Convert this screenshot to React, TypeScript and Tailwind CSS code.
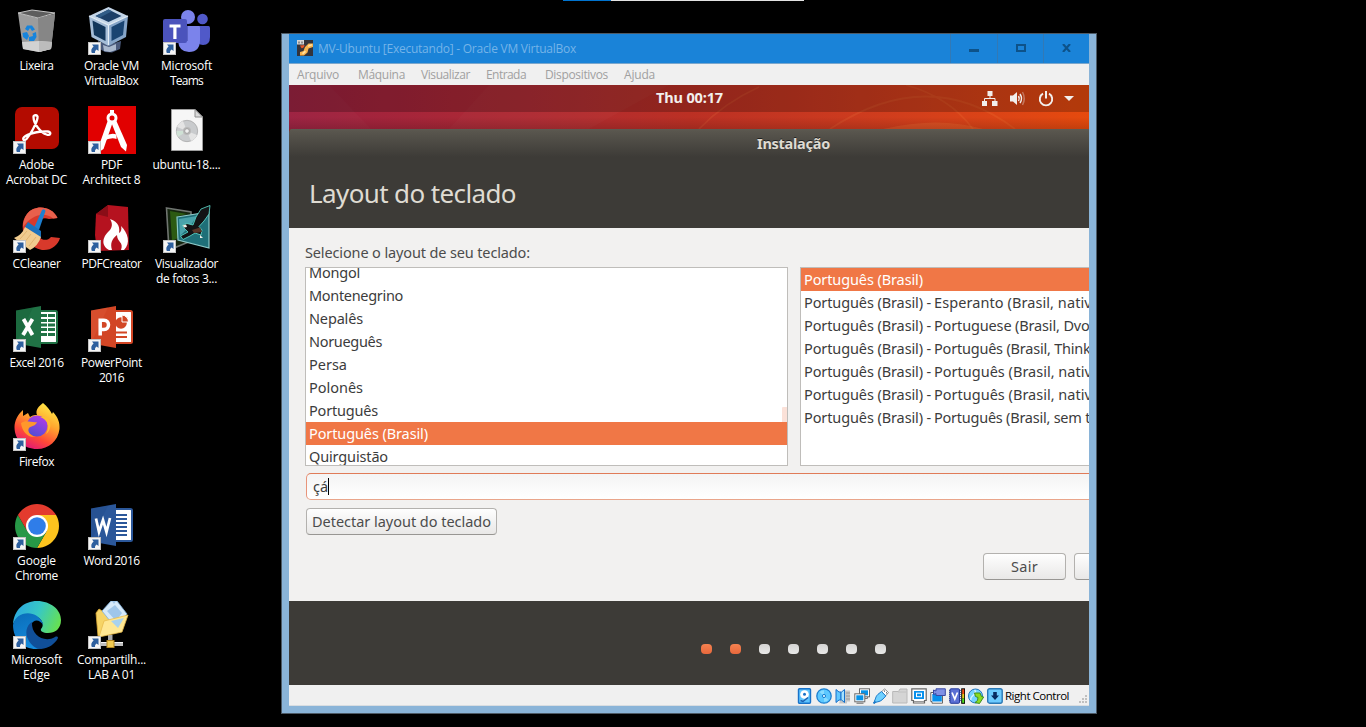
import React, { useLayoutEffect, useRef, type ReactNode } from "react";

/* Text whose tracking is adjusted so that it spans a given width. */
function Fit({ w, children, className = "" }: { w: number; children: string; className?: string }) {
  const ref = useRef<HTMLSpanElement>(null);
  useLayoutEffect(() => {
    const el = ref.current;
    if (!el) return;
    el.style.letterSpacing = "0px";
    const natural = el.getBoundingClientRect().width;
    el.style.letterSpacing = `${(w - natural) / children.length}px`;
  }, [w, children]);
  return (
    <span ref={ref} className={`inline-block whitespace-pre ${className}`}>
      {children}
    </span>
  );
}

function Icon48({ children }: { children: ReactNode }) {
  return (
    <svg viewBox="0 0 48 48" className="block size-12">
      {children}
    </svg>
  );
}

const BinIcon = () => (
  <Icon48>
    <path d="M5 6 L24 11 L42 7 L38 42 L26 45 L10 42Z" fill="#9c9c9c" />
    <path d="M5 6 L19 3 L42 6 L25 11Z" fill="#5d5d5d" stroke="#c4c4c4" strokeWidth="1" />
    <path d="M25 11 L42 7 L38 42 L26 45Z" fill="#868686" />
    <path d="M9 35 L26 34 L39 35 L38 42 L26 45 L10 42Z" fill="#d2d2d2" />
    <path d="M26 34 L39 35 L38 42 L26 45Z" fill="#bcbcbc" />
    <path d="M12 22 L14 18.500 L19 18.500 L22 22.500 L19 24 L17 21 L15 24Z" fill="#1684dc" />
    <path d="M9.500 26 L14 25 L16 29 L14 33 L10 30Z" fill="#1684dc" />
    <path d="M16 30 L20 29 L19.500 26.500 L23 25 L23.500 30 L21 34 L16 34Z" fill="#1684dc" />
  </Icon48>
);

const VBoxIcon = () => (
  <Icon48>
    <path d="M10 34 L20 38 L33 34 L32 42 L24 45.500 L17 45 L10 41Z" fill="#4a5a7c" />
    <path d="M15 38 L21 40 L28 37 V43 L22 45 L16 44Z" fill="#aab9ce" />
    <path d="M1 9 L20.500 18 V39 L3.500 30Z" fill="#a4bdd8" />
    <path d="M20.500 18 L40 9 L38 30 L20.500 39Z" fill="#86a5c9" />
    <path d="M1 9 L20.500 0 L40 9 L20.500 18Z" fill="#c3d5e8" />
    <path d="M7.500 9 L20.500 2.500 L33.500 9 L20.500 15Z" fill="#1c3f68" />
    <path d="M4.500 13.500 L17.500 20 V34 L6 28Z" fill="#12375c" />
    <path d="M23.500 20 L36.500 13.500 L35 28 L23.500 34Z" fill="#1a4472" />
    <path d="M7.500 9 L20.500 2.500 L24 4.300 L11.500 10.800Z" fill="#315c87" />
    <path d="M1 9 L20.500 18 L40 9 M20.500 18 V38" fill="none" stroke="#e3edf6" strokeWidth="1.200" />
  </Icon48>
);

const TeamsIcon = () => (
  <Icon48>
    <circle cx="39.500" cy="12" r="5.300" fill="#5059c9" />
    <path d="M35 19 H45.500 Q47 19 47 21 V30 Q47 38 40 38 Q37 38 35 36Z" fill="#5059c9" />
    <circle cx="25" cy="10" r="7" fill="#7b83eb" />
    <path d="M15 19 H36 Q37 19 37 21 V33 Q37 45 26 45 Q16 45 15 34Z" fill="#7b83eb" />
    <path d="M15 19 H25 V34 H15Z" fill="#5a62c3" />
    <rect x="0" y="12" width="24" height="24" rx="2" fill="#4b53bc" />
    <path d="M6.500 17.500 h11 v3 h-4 v11.500 h-3.200 v-11.500 h-3.800Z" fill="#fff" />
  </Icon48>
);

const AcrobatIcon = () => (
  <Icon48>
    <rect x="2" y="1" width="44" height="42" rx="7" fill="#b30b00" />
    <path
      d="M20.500 11 C20 8.500 25.500 8.500 24.500 12 C23.500 18 17 29 13.500 33 C10.500 36 8.500 32.500 12.500 30 C18 26.500 29 25 35 25.500 C39 26 37.500 30 33.500 28.500 C28 27 20.500 18 20.500 11Z"
      fill="none"
      stroke="#fff"
      strokeWidth="2.300"
    />
  </Icon48>
);

const ArchitectIcon = () => (
  <Icon48>
    <rect width="48" height="48" fill="#e10000" />
    <path d="M22 4 h4 v5 h-4Z" fill="#fff" />
    <circle cx="24" cy="12" r="4" fill="none" stroke="#fff" strokeWidth="3" />
    <path d="M20 14 L24.500 17 L15.500 43 L11 46 L10.500 41Z" fill="#fff" />
    <path d="M28 14 L23.500 17 L33 41 L38 45.500 L39 39Z" fill="#fff" />
    <path d="M16.500 30.500 Q23 26.500 28.500 28.500 L28.500 33 Q23 31 15 35Z" fill="#fff" />
  </Icon48>
);

const IsoIcon = () => (
  <Icon48>
    <path d="M8.500 3.500 H32 L39.500 11 V44.500 H8.500Z" fill="#f6f6f6" stroke="#9d9d9d" />
    <path d="M32 3.500 V11 H39.500Z" fill="#d9d9d9" stroke="#8e8e8e" />
    <circle cx="24" cy="25" r="10.700" fill="#c9cbcd" stroke="#a2a2a2" strokeWidth=".7" />
    <path d="M24 25 L14 21 A10.700 10.700 0 0 1 20 15Z M24 25 L34 29 A10.700 10.700 0 0 1 28 35Z" fill="#e4e4e4" />
    <path d="M24 25 L15 31 A10.700 10.700 0 0 1 13.500 25Z" fill="#cfe1d5" />
    <circle cx="24" cy="25" r="4" fill="#b9b9b9" />
    <circle cx="24" cy="25" r="2.300" fill="#f1f1f1" stroke="#888" strokeWidth=".6" />
  </Icon48>
);

const CCleanerIcon = () => (
  <Icon48>
    <path
      d="M44.500 13 C39 1 22 -1 14 9 C4 21 12 42 29 45 C38 46 45 40 47 33 L38 32 C33 38 24 34 23 25 C22 16 29 11 36 14Z"
      fill="#d8392b"
    />
    <path d="M44.500 13 C39 1 22 -1 14 9 C11 13 10 18 10 22 C18 10 32 6 40 13.500Z" fill="#e8604c" />
    <path d="M29 5 Q31.500 3 32.500 6 L26 25 L21 23Z" fill="#1d7fd0" />
    <path d="M15 17 L28 26 L28 33 L12 22Z" fill="#1b72bd" />
    <path d="M12 22 L28 32 Q25 41 17 45 L1 33 Q9 30 12 22Z" fill="#f0cc8f" />
    <path d="M14 26 L7 34 M18 29 L11 38 M23 32 L16 41" stroke="#e2b470" strokeWidth="1" />
  </Icon48>
);

const PdfCreatorIcon = () => (
  <Icon48>
    <path d="M8 9 L20 0 L40 2 L41 45 L9 46 L7 30Z" fill="#b5121f" />
    <path d="M8 9 L20 0 V12Z" fill="#8a0d17" />
    <path
      d="M21 45 C12 40 15 31 22 25 C25 21 24 17 22 14 C31 17 32 23 31 28 C33 27 34 24 33 21 C40 28 43 38 36 45 L33 45 C36 37 29 37 29 30 C24 34 22 38 24 45Z"
      fill="#fff"
    />
  </Icon48>
);

const PhotoIcon = () => (
  <Icon48>
    <path d="M3.500 3 L28 7 V36 L6 45Z" fill="#15250f" stroke="#6f7470" strokeWidth="1.600" />
    <path d="M7 6 L24 9 L15 11 V33 L9 36Z" fill="#2c5a12" />
    <path d="M14 12 L46 7 V43 L15 35Z" fill="#1f6f78" stroke="#8cc9c8" strokeWidth="1.200" />
    <path d="M16 14 L34 11 L28 20 L17 31Z" fill="#4aa3ab" />
    <path
      d="M19.500 20 L24 18.500 L30 20 L33 12 L38 4 L47 .5 L46 9 L41 16 L36 21.500 L39 25 L38 30 L32 28 L27 31 L20 34.500 L17.500 31 L25 27 L21 23Z"
      fill="#131315"
      stroke="#5fe0d0"
      strokeWidth=".8"
    />
    <path d="M29 25 L37 22.500 L39 27 L31 28Z" fill="#5b3528" />
    <path d="M19.500 20.500 L23 19.500 L24 22 L21.500 22.500Z" fill="#f0f0e8" />
    <path d="M37 30 L40 33 L37 33Z" fill="#f0f0e8" />
  </Icon48>
);

function OfficeBook({ color, dark, children }: { color: string; dark: string; children: ReactNode }) {
  return (
    <Icon48>
      <rect x="26" y="7" width="18" height="32" rx="1.500" fill="#fff" stroke={color} strokeWidth="2" />
      {children}
      <path d="M3 6.500 L28 2 V44 L3 39.500Z" fill={color} />
      <path d="M3 39.500 L20 3.500 L3 6.500Z" fill={dark} opacity=".18" />
    </Icon48>
  );
}

const ExcelIcon = () => (
  <div className="grid">
    <div className="col-start-1 row-start-1">
      <OfficeBook color="#207245" dark="#0b4a28">
        <path
          d="M28 10 h6 v3 h-6Z M28 15 h6 v3 h-6Z M28 19.500 h6 v3 h-6Z M28 24 h6 v3 h-6Z M28 29 h6 v3 h-6Z M35 10 h7 v3 h-7Z M35 15 h7 v3 h-7Z M35 19.500 h7 v3 h-7Z M35 24 h7 v3 h-7Z M35 29 h7 v3 h-7Z"
          fill="#207245"
        />
      </OfficeBook>
    </div>
    <svg viewBox="0 0 48 48" className="col-start-1 row-start-1 size-12">
      <path d="M10.500 15 L19.500 31 M19.500 15 L10 31" stroke="#fff" strokeWidth="3.800" />
    </svg>
  </div>
);

const PowerPointIcon = () => (
  <div className="grid">
    <div className="col-start-1 row-start-1">
      <OfficeBook color="#d24625" dark="#ef7655">
        <circle cx="33" cy="19" r="5.800" fill="#d24625" />
        <path d="M34 18 V11 A7 7 0 0 1 40.500 18Z" fill="#d24625" stroke="#fff" />
        <path d="M28 28.500 h11 M28 33 h11" stroke="#d24625" strokeWidth="2" />
      </OfficeBook>
    </div>
    <svg viewBox="0 0 48 48" className="col-start-1 row-start-1 size-12">
      <path d="M12.200 31.500 V16.200 H16 C22 16.200 22 25.500 16 25.500 H12.200" fill="none" stroke="#fff" strokeWidth="3.500" />
    </svg>
  </div>
);

const WordIcon = () => (
  <div className="grid">
    <div className="col-start-1 row-start-1">
      <OfficeBook color="#2b579a" dark="#163c75">
        <path
          d="M28 13 h11 M28 17 h11 M28 21 h11 M28 25 h11 M28 29 h11 M28 33 h11"
          stroke="#2b579a"
          strokeWidth="1.800"
        />
      </OfficeBook>
    </div>
    <svg viewBox="0 0 48 48" className="col-start-1 row-start-1 size-12">
      <path d="M8 16.500 L11 30 L15 18 L18.500 30 L22 16" fill="none" stroke="#fff" strokeWidth="2.700" />
    </svg>
  </div>
);

const FirefoxIcon = () => (
  <Icon48>
    <defs>
      <linearGradient id="ffBody" x1=".8" y1="0" x2=".3" y2="1">
        <stop offset="0" stopColor="#fff04a" />
        <stop offset=".4" stopColor="#ffa52e" />
        <stop offset=".72" stopColor="#ff4a36" />
        <stop offset="1" stopColor="#e0157a" />
      </linearGradient>
      <linearGradient id="ffGlobe" x1=".7" y1="0" x2=".2" y2="1">
        <stop offset="0" stopColor="#b13ce8" />
        <stop offset="1" stopColor="#4c4fd0" />
      </linearGradient>
    </defs>
    <path
      d="M30 0 C34 3 37 7 39 11 L40 9 C45 14 47 20 46.500 26 C45 38 36 46 24 46 C11 46 1.500 37 1.500 24 C1.500 18 5 11 10 7 L10 13 L15 10 L17 14 C20 12 22 12 24 12 C22 7 26 3 30 0Z"
      fill="url(#ffBody)"
    />
    <circle cx="24" cy="23" r="10.500" fill="url(#ffGlobe)" />
    <path d="M8 20 C13 16 19 20 24 19 C23 23 18 23 16 25 C14 28 17 33 23 34 C14 35 9 28 8 20Z" fill="#ff982b" />
    <path d="M27 14 C34 16 38 23 33 31 C37 28 40 20 34 14Z" fill="#ffbd32" />
  </Icon48>
);

const ChromeIcon = () => (
  <Icon48>
    <path d="M24 13 H43.050 A22 22 0 0 1 24 46 L33.500 29.500Z" fill="#fcc31e" />
    <path d="M33.500 29.500 L24 46 A22 22 0 0 1 4.950 13 L14.500 29.500 L24 34Z" fill="#279847" />
    <path d="M24 13 H43.050 A22 22 0 0 0 4.950 13 L14.500 29.500Z" fill="#e33b2e" />
    <circle cx="24" cy="24" r="11" fill="#fff" />
    <circle cx="24" cy="24" r="8.800" fill="#2f7de9" />
  </Icon48>
);

const EdgeIcon = () => (
  <Icon48>
    <defs>
      <linearGradient id="edgeTop" x1="0" y1=".3" x2="1" y2=".6">
        <stop offset="0" stopColor="#2ba8e2" />
        <stop offset=".5" stopColor="#38c8c4" />
        <stop offset="1" stopColor="#66e052" />
      </linearGradient>
      <linearGradient id="edgeSide" x1="0" y1="0" x2=".4" y2="1">
        <stop offset="0" stopColor="#0a6cb8" />
        <stop offset="1" stopColor="#148bdc" />
      </linearGradient>
    </defs>
    <path
      d="M0 23 C1 9 11 0 24 0 C38 0 48 9 48 19 C48 28 42 32 35 32 C30 32 27 30 28 28 C31 25 30 20 26 17 C17 10 4 14 0 23Z"
      fill="url(#edgeTop)"
    />
    <path d="M0 24 C2 13 15 9 24 15 C28 18 30 21 30 24 C27 18 20 18 18 24 C15 34 23 42 35 40 C31 45 29 48 23 48 C10 48 0 38 0 24Z" fill="url(#edgeSide)" />
    <path d="M19 21 C13 24 12 33 15 38 C18 45 24 48 28 48 C36 47 42 43 45 37 C45 36 44 35 42 36 C32 42 18 35 19 21Z" fill="#104f99" />
  </Icon48>
);

const ShareIcon = () => (
  <Icon48>
    <path d="M20 34 h4.500 v9 h-4.500Z" fill="#a9a9a9" />
    <path d="M12 41 H35 V45 H12Z" fill="#bdbdbd" />
    <path d="M12 41.500 H35" stroke="#f5f5f5" />
    <path d="M8 12 L11 8 L19 13 L34 18 L27 32 L10 35Z" fill="#f6d466" stroke="#dba834" strokeWidth=".8" />
    <path d="M14 10 L23 0 H29 L39 13 L27 26Z" fill="#d5e9fa" stroke="#80afd9" strokeWidth=".8" />
    <path d="M24 0 L26 3 L28 0Z M19 10 L27 4 L34 12 L28 20Z" fill="#9fc6ea" />
    <path d="M16 20 L40 14 L34 31 L11 36Z" fill="#ffe793" stroke="#e8bb4d" strokeWidth=".8" />
    <path d="M23 20 L36 17 L30 27Z" fill="#a9d2ef" />
    <rect x="19" y="39.500" width="7" height="7" fill="#f2cb52" stroke="#b28622" />
  </Icon48>
);

const ShortcutArrow = () => (
  <svg viewBox="0 0 13 13" className="absolute bottom-0 left-0 size-[13px]">
    <rect x=".5" y=".5" width="12" height="12" fill="#f5f5f5" stroke="#c3c3c3" />
    <path d="M4 2.500 H10.500 V9 L8.600 7.500 Q6.500 8.500 7 11 H3.800 Q2.200 7.400 5.600 4.500Z" fill="#2d5f9e" />
  </svg>
);

type Shortcut = { icon: ReactNode; lines: [string, number][]; link?: boolean };

const columns: (Shortcut | null)[][] = [
  [
    { icon: <BinIcon />, lines: [["Lixeira", 34]] },
    { icon: <AcrobatIcon />, lines: [["Adobe", 35], ["Acrobat DC", 61]], link: true },
    { icon: <CCleanerIcon />, lines: [["CCleaner", 48]], link: true },
    { icon: <ExcelIcon />, lines: [["Excel 2016", 54]], link: true },
    { icon: <FirefoxIcon />, lines: [["Firefox", 35]], link: true },
    { icon: <ChromeIcon />, lines: [["Google", 39], ["Chrome", 43]], link: true },
    { icon: <EdgeIcon />, lines: [["Microsoft", 51], ["Edge", 27]], link: true },
  ],
  [
    { icon: <VBoxIcon />, lines: [["Oracle VM", 55], ["VirtualBox", 54]], link: true },
    { icon: <ArchitectIcon />, lines: [["PDF", 21], ["Architect 8", 58]], link: true },
    { icon: <PdfCreatorIcon />, lines: [["PDFCreator", 60]], link: true },
    { icon: <PowerPointIcon />, lines: [["PowerPoint", 61], ["2016", 25]], link: true },
    null,
    { icon: <WordIcon />, lines: [["Word 2016", 56]], link: true },
    { icon: <ShareIcon />, lines: [["Compartilh...", 69], ["LAB A 01", 47]], link: true },
  ],
  [
    { icon: <TeamsIcon />, lines: [["Microsoft", 51], ["Teams", 33]], link: true },
    { icon: <IsoIcon />, lines: [["ubuntu-18....", 68]] },
    { icon: <PhotoIcon />, lines: [["Visualizador", 63], ["de fotos 3...", 61]], link: true },
  ],
];

function DesktopItem({ item }: { item: Shortcut }) {
  return (
    <>
      <div className="relative ml-[13px] size-12">
        {item.icon}
        {item.link && <ShortcutArrow />}
      </div>
      <div className="mt-[3px] flex w-[73px] flex-col items-center text-[12px] leading-[15px] text-white">
        {item.lines.map(([t, w]) => (
          <Fit key={t} w={w}>
            {t}
          </Fit>
        ))}
      </div>
    </>
  );
}

const menus: [string, number, string][] = [
  ["Arquivo", 42, "w-[61px]"],
  ["Máquina", 47, "w-[63px]"],
  ["Visualizar", 49, "w-[65px]"],
  ["Entrada", 40, "w-[59px]"],
  ["Dispositivos", 63, "w-[79px]"],
  ["Ajuda", 31, "w-[40px]"],
];

const languages: [string, number][] = [
  ["Mongol", 51],
  ["Montenegrino", 94],
  ["Nepalês", 54],
  ["Norueguês", 73],
  ["Persa", 38],
  ["Polonês", 54],
  ["Português", 69],
  ["Português (Brasil)", 119],
  ["Quirguistão", 79],
];

const variants: [string, number][] = [
  ["Esperanto (Brasil, nativo)", 171],
  ["Portuguese (Brasil, Dvorak)", 181],
  ["Português (Brasil, ThinkPad)", 186],
  ["Português (Brasil, nativo)", 171],
  ["Português (Brasil, nativo)", 171],
  ["Português (Brasil, sem teclas)", 193],
];

function Row({ selected = false, children }: { selected?: boolean; children: ReactNode }) {
  return (
    <div
      className={`flex h-[23px] shrink-0 overflow-hidden pl-[3px] leading-[23px] ${
        selected ? "bg-[#f07746] text-white" : "text-[#3c3c3c]"
      }`}
    >
      {children}
    </div>
  );
}

const statusIcons: ReactNode[] = [
  <>
    <rect x="1.500" y=".7" width="12" height="14.500" rx="1" fill="#5fc5ff" stroke="#1872c9" strokeWidth="1.400" />
    <circle cx="7.500" cy="6.500" r="4.300" fill="#fff" />
    <circle cx="7.500" cy="6.300" r="1.500" fill="#1872c9" />
    <path d="M3.500 12.500 L6 13.500 L11 9.500" fill="none" stroke="#1d5fae" strokeWidth="1.500" />
  </>,
  <>
    <circle cx="8" cy="8" r="7.200" fill="#5cc8ff" stroke="#1c7fd0" strokeWidth="1.300" />
    <path d="M3.500 4 A6 6 0 0 1 8 2.200 L8 8Z M12.500 12 A6 6 0 0 1 8 13.800 V8Z" fill="#8adcff" />
    <circle cx="8" cy="8" r="1.600" fill="#d7f4ff" stroke="#1c7fd0" />
  </>,
  <>
    <path d="M9 2.500 h6 v11 h-3 v2 h-8Z" fill="#c7c7c7" />
    <path d="M11 5 h4 M11 8 h4 M11 11 h4" stroke="#999" />
    <path d="M1 1.500 L4 4 H6 V12 H4 L1 14.500Z" fill="#62c8ff" stroke="#166fca" />
    <path d="M6 4.500 L9.500 1.500 V14.500 L6 11.500Z" fill="#a5e2ff" stroke="#166fca" />
  </>,
  <>
    <rect x="5.500" y=".8" width="10" height="8" fill="#fff" stroke="#6a6a6a" />
    <rect x="7" y="2.300" width="7" height="5" fill="#0793e8" />
    <path d="M10.500 10.500 h3 v-1.500" stroke="#777" fill="none" />
    <rect x=".8" y="5.800" width="10" height="8" fill="#fff" stroke="#6a6a6a" />
    <rect x="2.300" y="7.300" width="7" height="5" fill="#0793e8" />
    <path d="M2.500 15.200 h7" stroke="#666" />
  </>,
  <>
    <path d="M8.500 4 L11.500 .8 L15.500 4.500 L12.500 8Z" fill="#fff" stroke="#8f8f8f" />
    <path d="M11.500 2.500 v1.200 M13.500 4.200 v1.200" stroke="#555" />
    <path d="M2 14.500 L1.500 13 C3 10 2.500 8 6 5.500 L8.500 3.500 L12.800 8 L10 11 C7 14 5 13.500 2 14.500Z" fill="#6fd0ff" stroke="#1b78c7" />
    <path d="M.5 15.500 L2.500 13.500" stroke="#1b78c7" strokeWidth="2" />
  </>,
  <>
    <path d="M.7 3.500 H6.500 L8 1 H15 V15 H.7Z" fill="#d5d5d5" stroke="#b8b8b8" />
    <path d="M6 4 H14.500" stroke="#c2c2c2" />
  </>,
  <>
    <path d="M.8 .8 H15.200 V12.500 H13.500 V15 H2.500 V12.500 H.8Z" fill="#fff" stroke="#666" strokeWidth="1.200" />
    <rect x="3" y="3" width="10" height="8" fill="#0790ec" />
    <rect x="5.500" y="5.200" width="5" height="3.500" fill="#0790ec" stroke="#fff" />
    <path d="M3 13.500 h10" stroke="#999" />
  </>,
  <>
    <path d="M.8 4.500 H12.500 V15.200 H2 V13.500 H.8Z" fill="#fff" stroke="#666" />
    <rect x="2.300" y="6" width="9.500" height="7.500" fill="#0790ec" />
    <path d="M3.500 2 L6 3 V.8 H15.300 V7.500 H6 V5.500 L3.500 6.500Z" fill="#8090e4" stroke="#3948a2" />
  </>,
  <>
    <rect x="1" y=".8" width="9.500" height="14.500" rx="1" fill="#5b70d4" stroke="#253b99" />
    <path d="M.3 2 V14 M11.200 2 V14" stroke="#253b99" strokeWidth="1" strokeDasharray="1 1" />
    <path d="M3 4.500 L5.800 11 L8.500 4.500" fill="none" stroke="#fff" strokeWidth="1.700" />
    <rect x="12.200" y=".3" width="4" height="15.500" fill="#000" />
    <rect x="13.200" y="1.300" width="2" height="4.700" fill="#ef4c14" />
    <rect x="13.200" y="6" width="2" height="4.500" fill="#e7c81a" />
    <rect x="13.200" y="10.500" width="2" height="4.300" fill="#4fe21e" />
  </>,
  <>
    <circle cx="7.500" cy="8" r="7" fill="#75d2ff" stroke="#2174bd" />
    <path d="M6.500 2 Q9 4 5.500 7 T3 12" stroke="#d6f4ff" fill="none" strokeWidth="1.500" />
    <path d="M6.500 5 H12 L13.500 8.500 L15.700 9 L11.500 15.500 L7 14.500 L9.500 12.500 L10 9.500 L7.500 8.500Z" fill="#8bdb20" stroke="#3d8f20" />
  </>,
  <>
    <rect x=".7" y=".7" width="14.500" height="14.500" rx="2" fill="#6dcbff" stroke="#2b79b5" strokeWidth="1.400" />
    <path d="M6.200 4 H9.800 V7.500 H12 L8 12 L4 7.500 H6.200Z" fill="#082b61" />
  </>,
];

function TitleBar() {
  return (
    <div className="flex h-[30px] border-b border-[#7aa7cd] bg-[#1a83d8] pl-2 text-[12px] text-[#75b4e8]">
      <svg viewBox="0 0 16 16" className="mt-[6px] size-4">
        <rect width="16" height="16" fill="#34343b" />
        <path d="M8 7 L11.500 3.500 H16 V7 L11.500 8.500 L10.500 12.500 L7 15.500 H3 V12 L6.500 11Z" fill="#f9b34d" />
        <path d="M3 5.500 L7.500 5 Q7.500 8 4.500 8.200Z" fill="#e3572a" />
        <path d="M11.500 5 L15 4 V5.500 L11 7Z M5 13 L8 10.500 L9 12 L6 14.500Z" fill="#ffe2a1" />
        <rect width="7" height="4.500" fill="#d6d6d6" />
        <path d="M1 1.500 h2 v2 h-2Z M4 1.500 h2 v2 h-2Z" fill="#8d8d8d" />
      </svg>
      <div className="ml-[5px] flex-1 leading-[29px]">
        <Fit w={258}>MV-Ubuntu [Executando] - Oracle VM VirtualBox</Fit>
      </div>
      <div className="flex text-[#0d5289]">
        <div className="flex w-[47px] justify-center border-l border-[#3279b5] pt-[15px]">
          <div className="h-[3px] w-[10px] bg-[#0d5289]" />
        </div>
        <div className="flex w-[46px] justify-center border-l border-[#3279b5] pt-[10px]">
          <div className="h-2 w-[10px] border-2 border-[#0d5289]" />
        </div>
        <div className="flex w-[46px] justify-center border-l border-[#3279b5] pt-[10px]">
          <svg viewBox="0 0 9 8" className="h-2 w-[9px]">
            <path d="M1 0 L8 8 M8 0 L1 8" stroke="currentColor" strokeWidth="2.100" />
          </svg>
        </div>
      </div>
    </div>
  );
}

function TopPanel() {
  return (
    <div className="relative h-11 overflow-hidden bg-linear-to-r from-[#9d2040] via-[#bb3024] via-50% to-[#e64a0d]">
      <svg viewBox="0 0 800 44" className="absolute inset-0 h-11 w-[800px]">
        <path d="M0 0 H40 L82 44 H0Z M160 44 L200 0 H380 L300 44Z" fill="#ffffff" opacity=".02" />
        <path
          d="M410 44 Q435 18 470 2 M541 44 Q640 -21 726 44 M617 0 Q660 12 684 44"
          fill="none"
          stroke="#ff9a50"
          strokeWidth="1.800"
          opacity=".13"
        />
        <path d="M594 44 Q650 31 694 44Z" fill="#ff9d50" opacity=".18" />
      </svg>
      <div className="absolute inset-x-0 bottom-0 h-3 bg-linear-to-b from-transparent to-black/15" />
      <div className="relative flex h-[27px] items-center bg-black/22 text-[#f2efed]">
        <Fit w={67} className="-mt-[2px] ml-[367px] flex-none text-[14.5px] font-bold">
          Thu 00:17
        </Fit>
        <div className="ml-auto flex items-center pr-[15px]">
          <svg viewBox="0 0 16 16" className="size-4">
            <path d="M5.500 0 h5 v5 h-5Z M0 10 h5 v5 H0Z M10 10 h5.500 v5 H10Z" fill="currentColor" />
            <path d="M8 5 V7.500 M2.500 10 V7.500 H13 V10" fill="none" stroke="currentColor" />
          </svg>
          <svg viewBox="0 0 17 16" className="ml-[12px] h-4 w-[17px]">
            <path d="M0 4.500 H3 L7 1 V14 L3 10.500 H0Z" fill="currentColor" />
            <path d="M8.500 5 Q10 7.500 8.500 10 M10 3 Q13 7.500 10 12" fill="none" stroke="currentColor" strokeWidth="1.500" />
            <path d="M12.500 1 Q16 7.500 12.500 14" fill="none" stroke="currentColor" strokeWidth="1.500" opacity=".35" />
          </svg>
          <svg viewBox="0 0 16 16" className="ml-[11px] size-4">
            <path d="M5 2.700 A6.200 6.200 0 1 0 11 2.700" fill="none" stroke="currentColor" strokeWidth="1.900" />
            <path d="M8 0 V7.500" stroke="currentColor" strokeWidth="2" />
          </svg>
          <svg viewBox="0 0 10 5" className="ml-[10px] h-[5px] w-[10px]">
            <path d="M0 0 H10 L5 5Z" fill="currentColor" />
          </svg>
        </div>
      </div>
    </div>
  );
}

const buttonLook =
  "h-[27px] shrink-0 rounded-[4px] border border-[#b3b1ae] border-b-[#989693] bg-linear-to-b from-[#fefefe] to-[#e9e8e7] text-center leading-[24px] text-[#4c4c4c]";

function Installer() {
  return (
    <div className="flex h-[600px] flex-col overflow-hidden font-['Noto_Sans','Open_Sans',sans-serif] text-[14.5px]">
      <TopPanel />
      <div className="-mt-px bg-[#8d2725]">
        <div className="h-[100px] rounded-tl-[5px] bg-[#3d3b37] bg-[linear-gradient(#5f5d54_0px,#59564e_3px,#3d3b37_29px)] text-[#dfdbd2]">
          <div className="h-[30px] pl-[468px] leading-[30px] font-bold [text-shadow:0_-1px_0_#222]">
            <Fit w={73}>Instalação</Fit>
          </div>
          <div className="pl-5 text-[26px] leading-[70px]">
            <Fit w={207}>Layout do teclado</Fit>
          </div>
        </div>
      </div>
      <div className="flex h-[373px] shrink-0 flex-col bg-[#f2f1f0]">
        <div className="mt-[14px] h-[25px] pl-4 leading-[20px] text-[#4c4c4c]">
          <Fit w={225}>Selecione o layout de seu teclado:</Fit>
        </div>
        <div className="flex h-[199px] w-[1000px] gap-3 pl-4">
          <div className="relative flex w-[483px] flex-col overflow-hidden border border-[#bfbdba] bg-white">
            <div className="-mt-[7px] flex flex-col">
              {languages.map(([t, w]) => (
                <Row key={t} selected={t === "Português (Brasil)"}>
                  <Fit w={w}>{t}</Fit>
                </Row>
              ))}
            </div>
            <div className="absolute top-[139px] right-0 h-[15px] w-[5px] rounded-tl-[1px] bg-[#fbe1d8]" />
          </div>
          <div className="w-[489px] overflow-hidden border border-[#bfbdba] bg-white">
            <Row selected>
              <Fit w={119}>Português (Brasil)</Fit>
            </Row>
            {variants.map(([t, w], i) => (
              <Row key={i}>
                <Fit w={119}>Português (Brasil)</Fit>
                <span className="w-[11px] pl-[3.5px]">-</span>
                <Fit w={w}>{t}</Fit>
              </Row>
            ))}
          </div>
        </div>
        <div className="mt-[7px] ml-[17px] flex h-[27px] w-[980px] items-center rounded-[5px] border border-[#e9a58b] border-t-[#e07b58] border-l-[#e8947a] bg-linear-to-b from-[#f4f4f4] to-white pl-[6px] text-[#3c3c3c]">
          <Fit w={15}>çá</Fit>
          <div className="h-[17px] w-px bg-black" />
        </div>
        <div className={`mt-2 ml-[17px] w-[191px] ${buttonLook}`}>
          <Fit w={179}>Detectar layout do teclado</Fit>
        </div>
        <div className="mt-[18px] ml-[694px] flex w-[200px] gap-2">
          <div className={`w-[83px] ${buttonLook}`}>
            <Fit w={27}>Sair</Fit>
          </div>
          <div className={`w-[83px] ${buttonLook}`} />
        </div>
      </div>
      <div className="flex flex-1 gap-[18px] bg-[#3d3b37] pt-[43px] pl-[412px]">
        {[0, 1, 2, 3, 4, 5, 6].map((i) => (
          <div
            key={i}
            className={`h-[10px] w-[11px] rounded-[4px] bg-linear-to-b ${
              i < 2 ? "from-[#f58250] to-[#e8683c]" : "from-[#d5d4d3] to-[#e8e8e7]"
            }`}
          />
        ))}
      </div>
    </div>
  );
}

function StatusBar() {
  return (
    <div className="flex h-[21px] border-b border-[#d8dde1] bg-[#f0f0f0] pt-[3px] pl-[508px]">
      <div className="flex gap-[3px]">
        {statusIcons.map((icon, i) => (
          <svg key={i} viewBox="0 0 16 16" className="size-4">
            {icon}
          </svg>
        ))}
      </div>
      <div className="ml-[2px] text-[11.5px] leading-[15px] text-black">
        <Fit w={64}>Right Control</Fit>
      </div>
      <svg viewBox="0 0 9 9" className="mt-[7px] mr-[2px] ml-auto size-[9px]">
        <path d="M7 0 h2 v2 h-2Z M4 3 h2 v2 h-2Z M7 3 h2 v2 h-2Z M1 6 h2 v2 h-2Z M4 6 h2 v2 h-2Z M7 6 h2 v2 h-2Z" fill="#c0c0c0" />
      </svg>
    </div>
  );
}

export default function App() {
  return (
    <div className="relative h-[727px] w-[1366px] overflow-hidden bg-black font-['Open_Sans','Noto_Sans',sans-serif]">
      <div className="absolute top-0 left-[563px] flex h-px">
        <div className="w-12 bg-[#0073cf]" />
        <div className="w-[193px] bg-[#e3e3e3]" />
      </div>
      <div className="flex pt-[7px]">
        {columns.map((col, c) => (
          <div key={c} className="flex w-[75px] flex-col">
            {col.map((item, r) => (
              <div key={r} className="h-[99px]">
                {item && <DesktopItem item={item} />}
              </div>
            ))}
          </div>
        ))}
      </div>
      <div className="absolute top-[33px] left-[281px] h-[681px] w-[816px] border border-[#4d5a66] bg-[#8ab4d8] px-[7px] pb-[7px]">
        <TitleBar />
        <div className="flex h-[21px] bg-[#f0f0f0] pl-2 text-[12px] leading-[21px] text-[#a0a0a0]">
          {menus.map(([t, w, cell]) => (
            <div key={t} className={cell}>
              <Fit w={w}>{t}</Fit>
            </div>
          ))}
        </div>
        <Installer />
        <StatusBar />
      </div>
    </div>
  );
}
